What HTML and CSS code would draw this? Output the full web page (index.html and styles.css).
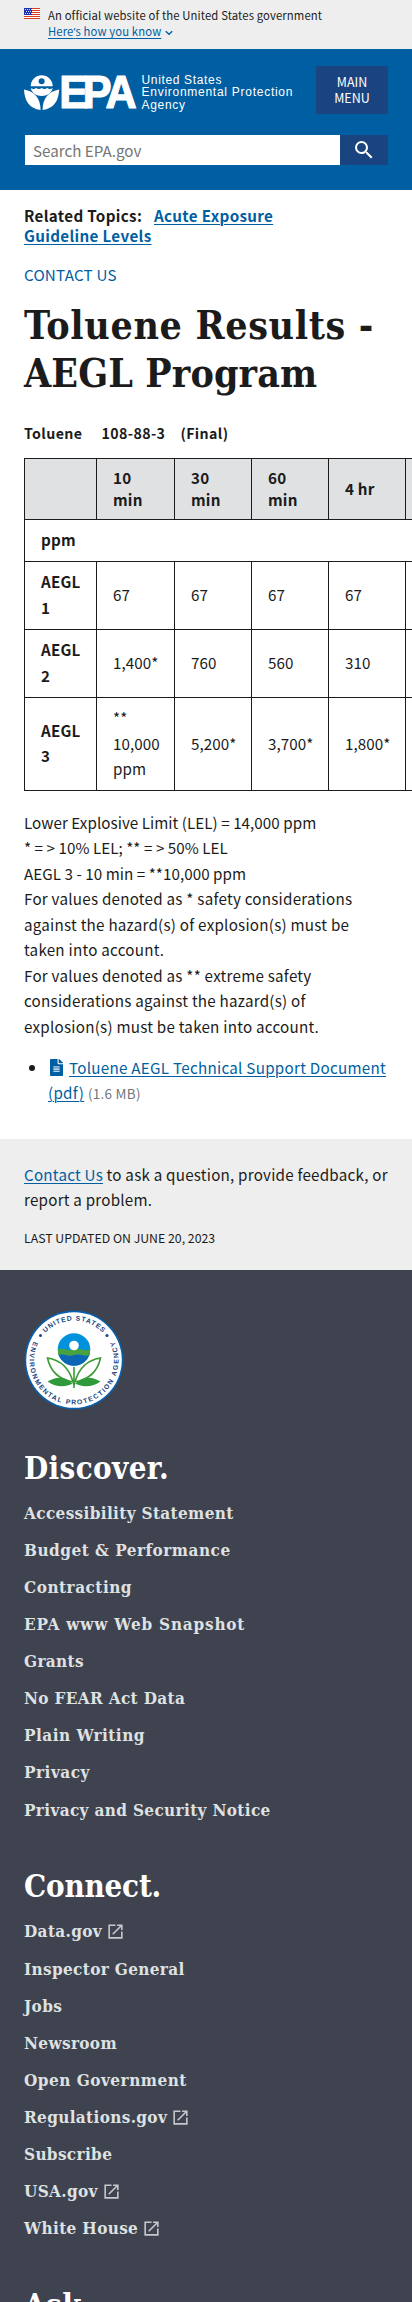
FILE: index.html
```html
<!DOCTYPE html>
<html lang="en">
<head>
<meta charset="utf-8">
<title>Toluene Results - AEGL Program | US EPA</title>
<meta name="viewport" content="width=device-width, initial-scale=1">
<link rel="stylesheet" href="styles.css">
</head>
<body>
<svg class="defs" width="0" height="0" aria-hidden="true">
  <symbol id="external" viewBox="0 0 24 24"><path d="M19 19H5V5h7V3H3v18h18v-9h-2v7zM14 3v2h3.590l-9.830 9.830 1.410 1.410L19 6.410V10h2V3h-7z"/></symbol>
</svg>
<section class="banner">
  <svg class="flag" width="16" height="11" viewBox="0 0 16 11"><path fill="#fff" d="M0 0h16v11H0z"/><path fill="#db3e1f" d="M0 0h16v1H0zM0 2h16v1H0zM0 4h16v1H0zM0 6h16v1H0zM0 8h16v1H0zM0 10h16v1H0z"/><path fill="#1e33b1" d="M0 0h8v7H0z"/><path d="M1 1.500h7M2 3.500h6M1 5.500h7" stroke="#fff" stroke-width=".8" stroke-dasharray="1 1"/></svg>
  <div>
    <p>An official website of the United States government</p>
    <p><a href="#">Here<span class="apos">’</span>s how you know</a><svg class="chev" width="8" height="6" viewBox="0 0 8 6"><path d="M.8 1.200 4 4.200l3.200-3" fill="none" stroke="#005ea2" stroke-width="1.400"/></svg></p>
  </div>
</section>
<header class="header">
  <div class="brand">
    <svg class="logo" width="272" height="41" viewBox="0 0 272 41" fill="#fff">
      <path d="M6.700 13.200a11 11 0 0 1 22 0z"/><circle cx="17.600" cy="8.200" r="3" fill="#005ea2"/>
      <path d="M6.700 15q2.700 1.800 5.500 0 2.700 1.800 5.500 0 2.700 1.800 5.500 0 2.700 1.800 5.500 0c-1 5-5.500 8-11 8s-10-3-11-8z"/>
      <path d="M0 16.500c10.500 2 16.500 8.500 16.600 20.500C5.500 35.500.5 28 0 16.500zM35.200 16.500c-10.500 2-16.500 8.500-16.600 20.500 11.100-1.500 16.100-9 16.600-20.500z"/>
      <text class="epa" transform="scale(.92 1)" x="38.200 64 88.500" y="34.800">EPA</text>
      <g class="agency"><text x="117.500" y="10.700" textLength="80">United States</text><text x="117.500" y="23.200" textLength="151">Environmental Protection</text><text x="117.500" y="35.900" textLength="43.500">Agency</text></g>
    </svg>
    <button class="menu">MAIN<br>MENU</button>
  </div>
  <form class="search">
    <input type="text" placeholder="Search EPA.gov" aria-label="Search">
    <button type="button" aria-label="Search"><svg width="24" height="24" viewBox="0 0 24 24" fill="#fff"><path d="M15.500 14h-.79l-.28-.27A6.470 6.470 0 0 0 16 9.500 6.500 6.500 0 1 0 9.500 16c1.610 0 3.090-.59 4.230-1.570l.27.28v.79l5 4.990L20.490 19l-4.990-5zm-6 0C7.010 14 5 11.990 5 9.500S7.010 5 9.500 5 14 7.010 14 9.500 11.990 14 9.500 14z"/></svg></button>
  </form>
</header>
<main class="main">
  <p class="related">Related Topics: <a href="#">Acute Exposure Guideline Levels</a></p>
  <p class="contact"><a href="#">CONTACT US</a></p>
  <h1><span class="wide">Toluene Results -</span> AEGL Program</h1>
  <h2 class="chem"><span>Toluene</span><span>108-88-3</span><span>(Final)</span></h2>
  <div class="scroll">
    <table>
      <colgroup><col class="c1"><col class="c2"><col><col><col><col></colgroup>
      <tr class="head"><th></th><th>10<br>min</th><th>30<br>min</th><th>60<br>min</th><th>4 hr</th><th>8 hr</th></tr>
      <tr class="unit"><th colspan="6">ppm</th></tr>
      <tr class="row"><th>AEGL<br>1</th><td>67</td><td>67</td><td>67</td><td>67</td><td>67</td></tr>
      <tr class="row"><th>AEGL<br>2</th><td>1,400*</td><td>760</td><td>560</td><td>310</td><td>250</td></tr>
      <tr class="tall"><th>AEGL<br>3</th><td>**<br>10,000<br>ppm</td><td>5,200*</td><td>3,700*</td><td>1,800*</td><td>1,400*</td></tr>
    </table>
  </div>
  <div class="notes">
    <p>Lower Explosive Limit (LEL) = 14,000 ppm<br>* = &gt; 10% LEL; ** = &gt; 50% LEL<br>AEGL 3 - 10 min = **10,000 ppm</p>
    <p class="prose">For values denoted as * safety considerations<br>against the hazard(s) of explosion(s) must be<br>taken into account.<br>For values denoted as ** extreme safety<br>considerations against the hazard(s) of<br>explosion(s) must be taken into account.</p>
  </div>
  <ul class="docs">
    <li><svg class="file" width="13" height="17" viewBox="0 0 384 512" preserveAspectRatio="none"><path fill="#005ea2" d="M224 136V0H24C10.700 0 0 10.700 0 24v464c0 13.300 10.700 24 24 24h336c13.300 0 24-10.700 24-24V160H248c-13.200 0-24-10.800-24-24zm64 236c0 6.600-5.400 12-12 12H108c-6.600 0-12-5.400-12-12v-8c0-6.600 5.400-12 12-12h168c6.600 0 12 5.400 12 12v8zm0-64c0 6.600-5.400 12-12 12H108c-6.600 0-12-5.400-12-12v-8c0-6.600 5.400-12 12-12h168c6.600 0 12 5.400 12 12v8zm0-72v8c0 6.600-5.400 12-12 12H108c-6.600 0-12-5.400-12-12v-8c0-6.600 5.400-12 12-12h168c6.600 0 12 5.400 12 12zM384 122v6H256V0h6c6.400 0 12.500 2.500 17 7l98 98c4.500 4.500 7 10.600 7 17z"/></svg><a href="#">Toluene AEGL Technical Support Document<br>(pdf)</a> <span class="size">(1.6 MB)</span></li>
  </ul>
</main>
<section class="feedback">
  <p><a href="#">Contact Us</a> to ask a question, provide feedback, or<br>report a problem.</p>
  <p class="updated">LAST UPDATED ON JUNE 20, 2023</p>
</section>
<footer class="footer">
  <svg class="seal" width="100" height="100" viewBox="0 0 100 100">
    <circle cx="50" cy="50" r="49.500" fill="#0b5ea8"/><circle cx="50" cy="50" r="47.800" fill="#fff"/>
    <path id="arc-top" d="M10.500 50a39.500 39.500 0 0 1 79 0" fill="none"/>
    <path id="arc-bottom" d="M11.100 28.500a44.500 44.500 0 1 0 77.800 0" fill="none"/>
    <g class="sealtext"><text><textPath href="#arc-top" startOffset="50%" text-anchor="middle" textLength="64">UNITED STATES</textPath></text>
    <text><textPath href="#arc-bottom" startOffset="50%" text-anchor="middle" textLength="178">ENVIRONMENTAL PROTECTION AGENCY</textPath></text></g>
    <circle cx="16.500" cy="25.500" r="1.500" fill="#1a4480"/><circle cx="83" cy="25.500" r="1.500" fill="#1a4480"/>
    <circle cx="50" cy="39.500" r="16.300" fill="#0092dc"/>
    <path d="M34.500 44.500h31A16.300 16.300 0 0 1 34.500 44.500z" fill="#0b66b3"/>
    <path d="M34 39.500q4-1.500 8 0t8 0 8 0 8 0v5.500q-4 1.500-8 0t-8 0-8 0-8 0z" fill="#48a23f"/>
    <circle cx="50" cy="35.500" r="4.800" fill="#fff"/>
    <g fill="none" stroke="#3d9b35" stroke-width="1.600"><path d="M50 57v21M49 72C45 57 36 50 23.500 48 26 60 33 69 49 72zM51 72C55 57 64 50 76.500 48 74 60 67 69 51 72z"/></g>
    <path d="M50 75.500C42 66 33 66 23.500 71.500 33 78 43 77.500 50 72.500c7 5 17 5.500 26.500-1C67 66 58 66 50 75.500z" fill="#2f9a3c"/>
  </svg>
  <h2>Discover.</h2>
  <ul>
    <li>Accessibility Statement</li><li class="loose">Budget &amp; Performance</li><li class="loose">Contracting</li><li class="looser">EPA www Web Snapshot</li><li>Grants</li><li>No FEAR Act Data</li><li class="loose">Plain Writing</li><li class="loose">Privacy</li><li>Privacy and Security Notice</li>
  </ul>
  <h2 class="snug">Connect.</h2>
  <ul>
    <li>Data.gov<svg class="ext"><use href="#external"/></svg></li><li>Inspector General</li><li>Jobs</li><li>Newsroom</li><li class="loose">Open Government</li><li>Regulations.gov<svg class="ext"><use href="#external"/></svg></li><li>Subscribe</li><li>USA.gov<svg class="ext"><use href="#external"/></svg></li><li>White House<svg class="ext"><use href="#external"/></svg></li>
  </ul>
  <h2>Ask.</h2>
</footer>
</body>
</html>
```
FILE: styles.css
```css
* { box-sizing: border-box; }
html { overflow-x: hidden; }
body { margin: 0; height: 2302px; overflow: hidden; background: #fff; color: #1b1b1b; font: 15.2px/25.500px "Noto Sans CJK SC", "Open Sans", sans-serif; letter-spacing: .050px; }
p, h1, h2, ul { margin: 0; padding: 0; }
a { color: #005ea2; text-decoration: underline; text-decoration-thickness: 1px; text-underline-offset: 2px; }
button { border: 0; font-family: inherit; }
.defs { position: absolute; }

.banner { display: flex; gap: 8px; height: 49px; padding: 7px 24px 0; background: #eee; font-size: 11.300px; line-height: 16.200px; letter-spacing: .120px; white-space: nowrap; }
.flag { margin-top: 1px; }
.apos { font-family: "Open Sans", sans-serif; line-height: 1; }
.chev { margin-left: 4px; }

.header { height: 141px; padding: 17px 24px 0; background: #005ea2; }
.brand { display: flex; justify-content: space-between; height: 48px; }
.logo { margin-top: 7px; flex: none; }
.epa { font: bold 47px "Liberation Sans", sans-serif; stroke: #fff; stroke-width: 1.200px; letter-spacing: 0; }
.agency { font: 12px "Liberation Sans", sans-serif; }
.menu { width: 72px; height: 48px; padding: 0; margin-left: -8px; background: #1a4480; color: #fff; font-size: 12.500px; line-height: 16px; flex: none; }
.search { display: flex; margin-top: 21px; height: 30px; }
.search input { width: 316px; height: 30px; border: 0; border-left: 1px solid #005ea2; border-radius: 0; padding: 0 8px; font: 15.200px "Noto Sans CJK SC", sans-serif; background: #fff; }
.search input::placeholder { color: #757575; }
.search button { width: 48px; padding: 0; background: #1a4480; display: flex; align-items: center; justify-content: center; }
.search button svg { width: 24px; height: 24px; }

.main { padding: 14.700px 24px 0; height: 949px; }
.related { width: 300px; font-weight: bold; line-height: 20px; letter-spacing: .330px; }
.related a { margin-left: 8px; }
.contact { margin-top: 19.700px; line-height: 20px; letter-spacing: .200px; }
.contact a { text-decoration: none; }
h1, .footer { font-family: "DejaVu Serif Condensed", "DejaVu Serif", serif; font-stretch: condensed; font-weight: bold; }
h1 { margin-top: 16.400px; font-size: 39px; line-height: 48px; letter-spacing: .100px; }
.wide { letter-spacing: .650px; }
.chem { display: flex; gap: 19px; margin-top: 26px; font-size: 14.200px; line-height: 20px; letter-spacing: .400px; }
.chem span:last-child { margin-left: -4px; }
.scroll { margin: 15px -24px 0 0; overflow: hidden; }
table { width: 459px; border-collapse: collapse; table-layout: fixed; }
.c1 { width: 72px; }
.c2 { width: 78px; }
th, td { border: 1px solid #1b1b1b; padding: 0 0 0 16px; text-align: left; vertical-align: middle; white-space: nowrap; }
th { letter-spacing: .200px; }
.head { height: 61px; line-height: 22.300px; }
.head th { background: #dfe1e2; padding-bottom: 1px; }
.unit { height: 42px; }
.unit th { padding-bottom: 1px; }
.row { height: 68px; }
.row th, .row td, .tall th, .tall td { padding-bottom: 1px; }
.tall { height: 93px; }
.notes { margin-top: 19px; white-space: nowrap; }
.prose { letter-spacing: .240px; }
.docs { margin-top: 15.500px; padding-left: 24px; white-space: nowrap; letter-spacing: .270px; }
.file { vertical-align: -2px; margin: 0 6px 0 2px; }
.size { color: #71767a; font-size: 13.500px; }

.feedback { height: 131px; padding: 22.600px 24px 0; background: #eee; white-space: nowrap; letter-spacing: .220px; }
.updated { margin-top: 15.500px; font-size: 12.300px; line-height: 20px; letter-spacing: 0; }

.footer { padding: 40px 24px 0; background: #3e434f; color: #dfe1e2; height: 1032px; overflow: hidden; letter-spacing: .350px; }
.seal { display: block; letter-spacing: 0; }
.sealtext { font: bold 6.800px "Liberation Sans", sans-serif; fill: #1a4480; }
.footer h2 { margin-top: 37.500px; font-size: 31px; line-height: 40px; color: #fff; letter-spacing: .400px; }
.footer .snug { letter-spacing: -.200px; }
.footer ul { margin-top: 7.300px; list-style: none; font-size: 17px; line-height: 37.100px; }
.footer ul + h2 { margin-top: 37.500px; }
.loose { letter-spacing: .500px; }
.looser { letter-spacing: .800px; }
.ext { width: 19px; height: 19px; margin-left: 4px; vertical-align: -4px; fill: #c6cace; }
```
